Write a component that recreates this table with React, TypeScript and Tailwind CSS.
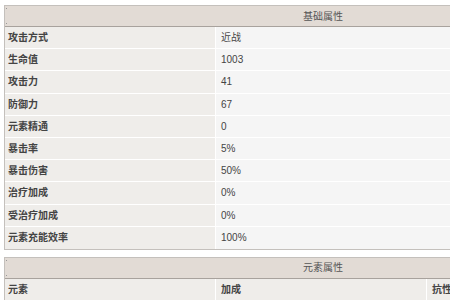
import React from 'react';

const font = { fontFamily: '"Liberation Sans", "Noto Sans CJK SC", sans-serif' };

const baseRows: [string, string][] = [
  ['攻击方式', '近战'],
  ['生命值', '1003'],
  ['攻击力', '41'],
  ['防御力', '67'],
  ['元素精通', '0'],
  ['暴击率', '5%'],
  ['暴击伤害', '50%'],
  ['治疗加成', '0%'],
  ['受治疗加成', '0%'],
  ['元素充能效率', '100%'],
];

const Header: React.FC<{ title: string }> = ({ title }) => (
  <div className="relative h-[22px] bg-[#e2dbd5] border-t border-b border-t-[#c4c0bc] border-b-[#a8a29d] flex items-center justify-center text-[10px] text-[#555]">
    <span className="absolute left-[1px] top-[2px] w-[1px] h-[1px] bg-[#999]" />
    <span className="absolute left-[1px] bottom-[2px] w-[1px] h-[1px] bg-[#999]" />
    {title}
  </div>
);

const App: React.FC = () => {
  return (
    <div className="w-[450px] h-[300px] overflow-hidden bg-white pl-[4px] pt-[5px]" style={font}>
      <div className="w-[638px] border-l border-r border-b border-[#c4c0bc]">
        <Header title="基础属性" />
        {baseRows.map(([k, v]) => (
          <div key={k} className="flex h-[22.2px] border-b border-white last:border-b-0">
            <div className="w-[211px] shrink-0 bg-[#efedea] pl-[3px] flex items-center text-[10px] font-bold text-[#444] border-r border-white">
              {k}
            </div>
            <div className="flex-1 bg-[#f5f5f5] pl-[5px] flex items-center text-[10px] text-[#444]">
              {v}
            </div>
          </div>
        ))}
      </div>

      <div className="w-[638px] mt-[7px] border-l border-r border-[#c4c0bc]">
        <Header title="元素属性" />
        <div className="flex h-[22px] bg-[#efedea] text-[10px] font-bold text-[#444]">
          <div className="w-[211px] shrink-0 pl-[3px] flex items-center border-r border-white">元素</div>
          <div className="w-[211px] shrink-0 pl-[5px] flex items-center border-r border-white">加成</div>
          <div className="flex-1 pl-[5px] flex items-center">抗性</div>
        </div>
      </div>
    </div>
  );
};

export default App;
